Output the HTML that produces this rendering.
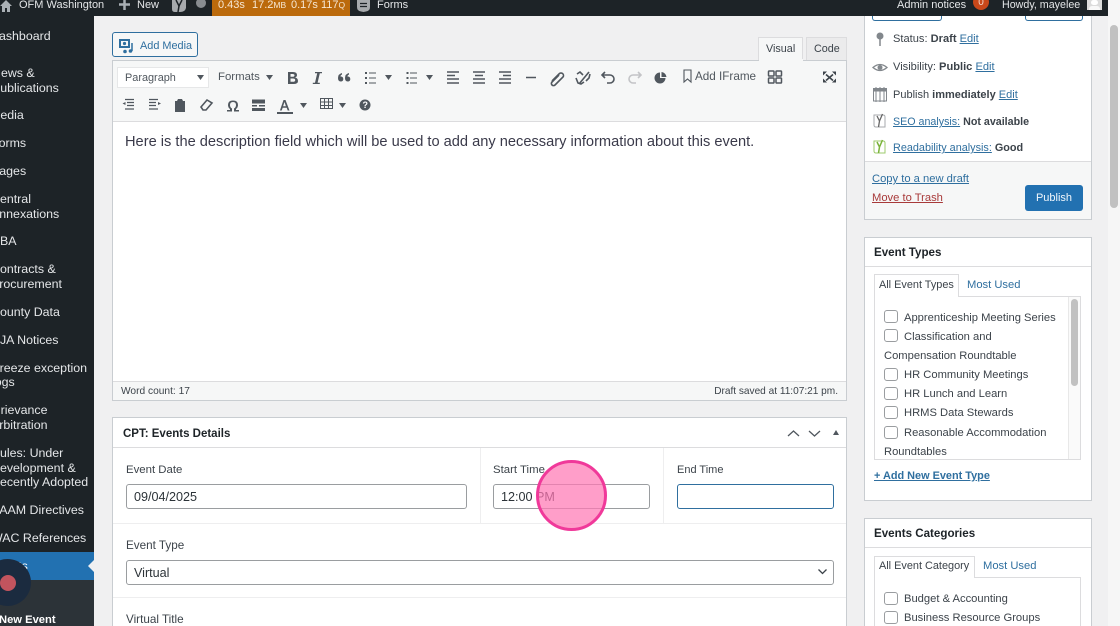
<!DOCTYPE html>
<html lang="en"><head><meta charset="utf-8"><title>Edit Event</title>
<style>
html,body{margin:0;padding:0;width:1120px;height:626px;overflow:hidden;background:#f0f0f1}
body{font-family:"Liberation Sans",sans-serif;font-size:12px;color:#3c434a}
#w{position:relative;width:1120px;height:626px;overflow:hidden;filter:blur(.35px)}
.a{position:absolute;box-sizing:border-box}
.t{position:absolute;white-space:nowrap;line-height:20px;height:20px}
.t:not(.s){margin-top:1px}
.s{color:#e4e6e8;font-size:12.4px}
.b{color:#e4e6e8;font-size:11px}
.l{color:#2f6f9f;text-decoration:underline}
.box{position:absolute;box-sizing:border-box;background:#fff;border:1px solid #c9cdd1}
.in{position:absolute;box-sizing:border-box;background:#fff;border:1px solid #9a9da0;border-radius:3px;height:25px;font-size:12.6px;line-height:24px;padding-left:7px;color:#2c3338}
.cb{position:absolute;box-sizing:border-box;width:14px;height:13px;background:#fff;border:1px solid #9a9da0;border-radius:3px}
svg{position:absolute;overflow:visible}
.ic{fill:none;stroke:#50575e;stroke-width:1.6}
.f{fill:#50575e;stroke:none}
.p{font-size:11px}
.r{font-size:11.2px}
.h{font-size:11.6px;font-weight:bold;color:#1d2327}
.lb{font-size:11.4px}
</style></head><body><div id="w">

<!-- sidebar -->
<div class="a" style="left:0;top:16px;width:94px;height:610px;background:#1d2327"></div>
<div class="a" style="left:0;top:580px;width:94px;height:46px;background:#2c3338"></div>
<div class="a" style="left:0;top:552px;width:94px;height:28px;background:#2271b1"></div>
<div class="a" style="left:88px;top:560px;border:6px solid transparent;border-right:6px solid #f0f0f1;border-left:0"></div>
<div class="t s" style="left:-10px;top:26px">Dashboard</div>
<div class="t s" style="left:-8px;top:63px">News &amp;</div>
<div class="t s" style="left:-8px;top:78px">Publications</div>
<div class="t s" style="left:-10px;top:105px">Media</div>
<div class="t s" style="left:-9px;top:133px">Forms</div>
<div class="t s" style="left:-9px;top:161px">Pages</div>
<div class="t s" style="left:-9px;top:189px">Central</div>
<div class="t s" style="left:-9px;top:204px">Annexations</div>
<div class="t s" style="left:-9px;top:231px">CBA</div>
<div class="t s" style="left:-9px;top:259px">Contracts &amp;</div>
<div class="t s" style="left:-9px;top:274px">Procurement</div>
<div class="t s" style="left:-9px;top:302px">County Data</div>
<div class="t s" style="left:-9px;top:330px">CJA Notices</div>
<div class="t s" style="left:-8px;top:358px">Freeze exception</div>
<div class="t s" style="left:-8px;top:372px">logs</div>
<div class="t s" style="left:-9px;top:400px">Grievance</div>
<div class="t s" style="left:-9px;top:415px">Arbitration</div>
<div class="t s" style="left:-9px;top:443px">Rules: Under</div>
<div class="t s" style="left:-9px;top:458px">Development &amp;</div>
<div class="t s" style="left:-9px;top:472px">Recently Adopted</div>
<div class="t s" style="left:-9px;top:500px">SAAM Directives</div>
<div class="t s" style="left:-9px;top:528px">WAC References</div>
<div class="t s" style="left:-10px;top:556px;color:#fff">Events</div>
<div class="t s" style="left:-1px;top:610px;color:#fff;font-weight:bold;font-size:11.200px">New Event</div>
<div class="a" style="left:-16px;top:559px;width:47px;height:47px;border-radius:50%;background:#1b2b3f"></div>
<div class="a" style="left:0;top:575px;width:16px;height:16px;border-radius:50%;background:#c2545e"></div>

<!-- add media -->
<div class="a" style="left:112px;top:32px;width:86px;height:25px;border:1px solid #2f6f9f;border-radius:3px;background:#f6f7f7"></div>
<svg style="left:119px;top:38px" width="16" height="16"><path d="M1 2h9v7H1z" fill="none" stroke="#2f6f9f" stroke-width="2"/><circle cx="5.500" cy="5.500" r="1.600" fill="#2f6f9f"/><path d="M13 5v8" stroke="#2f6f9f" stroke-width="1.500"/><circle cx="11.500" cy="13" r="1.800" fill="#2f6f9f"/><circle cx="6" cy="13.500" r="1.800" fill="#2f6f9f"/></svg>
<div class="t" style="left:140px;top:35px;color:#2f6f9f;font-size:10.900px">Add Media</div>

<!-- tabs -->
<div class="a" style="left:758px;top:37px;width:45px;height:24px;background:#f6f7f7;border:1px solid #dcdcde;border-bottom:0"></div>
<div class="t" style="left:766px;top:38px;font-size:10.800px">Visual</div>
<div class="a" style="left:806px;top:37px;width:41px;height:24px;background:#ebebec;border:1px solid #dcdcde;border-bottom:0"></div>
<div class="t" style="left:814px;top:38px;font-size:10.800px">Code</div>

<!-- editor -->
<div class="a" style="left:112px;top:60px;width:735px;height:341px;background:#fff;border:1px solid #c9cdd1"></div>
<div class="a" style="left:113px;top:61px;width:733px;height:61px;background:#f6f7f7;border-bottom:1px solid #dcdcde"></div>
<div class="a" style="left:758.500px;top:59px;width:44px;height:3px;background:#f6f7f7"></div>
<div class="a" style="left:117px;top:67px;width:92px;height:21px;background:#fff;border:1px solid #e6e7e8"></div>
<div class="t" style="left:125px;top:67px;font-size:10.900px;color:#50575e">Paragraph</div>
<svg style="left:0;top:0" width="1120" height="130">
<path class="f" d="M197 75h7l-3.500 5zM266 75h7l-3.500 5zM385 75h7l-3.500 5zM426 75h7l-3.500 5zM300 103h7l-3.500 5zM339 103h7l-3.500 5z"/>
<path class="f" d="M288 72h5q4 0 4 3 0 2-2 2.500 3 .5 3 3.500 0 3-4.500 3H288zm2.500 2v2.800h2q2 0 2-1.400t-2-1.400zm0 4.500v3.300h2.500q2.200 0 2.200-1.700 0-1.600-2.200-1.600z"/>
<path class="f" d="M315 72h7v1.200h-2.200l-2.200 9.600h2.200V84h-7v-1.200h2.200l2.200-9.600h-2.200z"/>
<path class="f" d="M338 78q0-4 4-5v1.500q-1.500.6-1.500 2 2.800 0 2.800 2.600 0 2.400-2.600 2.400-2.700 0-2.700-3.500zm7 0q0-4 4-5v1.500q-1.500.6-1.500 2 2.800 0 2.800 2.600 0 2.400-2.600 2.400-2.700 0-2.700-3.500z"/>
<path class="ic" d="M369 73h7M369 78h7M369 83h7M410 73h7M410 78h7M410 83h7" style="stroke-width:1"/>
<path class="f" d="M365 72h2v2h-2zM365 77h2v2h-2zM365 82h2v2h-2zM406.500 72h2v2h-2zM406.500 77h2v2h-2zM406.500 82h2v2h-2z"/>
<path class="ic" d="M447 72h12M447 75.500h8M447 79h12M447 83h12M473 72h12M475 75.500h8M473 79h12M473 83h12M499 72h12M503 75.500h8M499 79h12M499 83h12M526 77.500h10"/>
<path class="ic" d="M552 81l7-7a2.500 2.500 0 0 1 4 3l-8 8a2 2 0 0 1-3-3l7-7"/>
<path class="ic" d="M577 74l3-2 3 3M589 72l-10 12M590 74l-1 4-3 3M576 78l2 5 3 1 3-2"/>
<path class="ic" d="M605 72l-3 3 3 3M602 75h8a3.500 3.500 0 0 1 0 8h-3"/>
<path class="ic" style="stroke:#c3c4c7" d="M638 72l3 3-3 3M641 75h-8a3.500 3.500 0 0 0 0 8h3"/>
<path class="f" d="M660 73v5h5.500a5.500 5.500 0 1 1-5.500-5.500zM661.500 72a5.500 5.500 0 0 1 5 5h-5z"/>
<path class="ic" style="stroke-width:1.100" d="M684 70h7v12l-3.500-3-3.500 3z"/>
<rect class="ic" style="stroke-width:1.500" x="768.500" y="71" width="5.500" height="5" rx=".8"/><rect class="ic" style="stroke-width:1.500" x="776" y="71" width="5.500" height="5" rx=".8"/><rect class="ic" style="stroke-width:1.500" x="768.500" y="78" width="5.500" height="5" rx=".8"/><rect class="ic" style="stroke-width:1.500" x="776" y="78" width="5.500" height="5" rx=".8"/>
<path class="ic" style="stroke:#3c434a" d="M826 74.500l7 6M833 74.500l-7 6"/>
<path class="f" style="fill:#3c434a" d="M823 71.500h4l-4 4zM836 71.500h-4l4 4zM823 82.500h4l-4-4zM836 82.500h-4l4-4z"/>
<path class="ic" style="stroke-width:1.200" d="M125 99.500h9M127 102.500h7M127 105.500h7M125 109h9M149 99.500h9M149 102.500h7M149 105.500h7M149 109h9"/>
<path class="f" d="M125.500 102v3l-3-1.500zM158 102v3l3-1.500z"/>
<path class="f" d="M175 101h2l1-2h4l1 2h2v11h-10zM177 104h6v1.500h-2.200v4.500h-1.600v-4.500H177z"/>
<path class="ic" d="M201 107l6-7 5 3-6 7h-3z"/>
<path class="f" d="M227 110h3v-1q-2-1.500-2-4 0-4.500 5-4.500t5 4.500q0 2.500-2 4v1h3v1.500h-5v-3q2-1 2-3.500 0-3-3-3t-3 3q0 2.500 2 3.500v3h-5z"/>
<path class="f" d="M252 99.500h13v4h-13zM252 105h5v1.500h-5zM259 105h6v1.500h-6zM252 108h13v3h-13z"/>
<path class="f" d="M283.500 100h2l4 10.500h-1.800l-1-2.800h-4l-1 2.800h-1.800zm1 2-1.400 4.200h2.800z"/>
<path class="f" d="M277 112h16v2h-16z"/>
<path class="ic" style="stroke-width:1" d="M320.500 98.500h12v10h-12zM320.500 102h12M320.500 105.500h12M324.500 98.500v10M328.500 98.500v10"/>
<circle class="f" cx="365" cy="105" r="5.500"/>
</svg>
<div class="t" style="left:218px;top:66px;font-size:11.400px;color:#50575e">Formats</div>
<div class="t" style="left:695px;top:66px;font-size:11.700px;color:#50575e">Add IFrame</div>
<div class="t" style="left:362.500px;top:94px;font-size:9px;font-weight:bold;color:#fff">?</div>
<div class="t" style="left:125px;top:131px;font-size:14.640px;color:#3a3a4a">Here is the description field which will be used to add any necessary information about this event.</div>
<div class="a" style="left:113px;top:381px;width:733px;height:19px;background:#f6f7f7;border-top:1px solid #dcdcde"></div>
<div class="t" style="left:121px;top:381px;font-size:10.200px">Word count: 17</div>
<div class="t" style="right:282px;top:381px;font-size:10.100px">Draft saved at 11:07:21 pm.</div>

<!-- CPT -->
<div class="box" style="left:112px;top:417px;width:735px;height:230px"></div>
<div class="a" style="left:113px;top:447px;width:733px;height:1px;background:#dcdcde"></div>
<div class="t h" style="left:123px;top:423px;font-size:11.500px">CPT: Events Details</div>
<svg style="left:0;top:0" width="1120" height="626">
<path class="ic" style="stroke-width:1.300" d="M788 436l5.500-5 5.500 5M809 431l5.500 5 5.500-5M1032 255l5.500-5 5.500 5M1053 250l5.500 5 5.500-5M1032 536l5.500-5 5.500 5M1053 531l5.500 5 5.500-5"/>
<path class="f" d="M833 435l3-5 3 5zM1077 254l3-5 3 5zM1077 535l3-5 3 5z"/>
</svg>
<div class="a" style="left:113px;top:523px;width:733px;height:1px;background:#eeeeef"></div>
<div class="a" style="left:113px;top:597px;width:733px;height:1px;background:#eeeeef"></div>
<div class="a" style="left:480px;top:448px;width:1px;height:75px;background:#eeeeef"></div>
<div class="a" style="left:663px;top:448px;width:1px;height:75px;background:#eeeeef"></div>
<div class="t lb" style="left:126px;top:459px">Event Date</div>
<div class="t lb" style="left:493px;top:459px">Start Time</div>
<div class="t lb" style="left:677px;top:459px;font-size:11px">End Time</div>
<div class="in" style="left:126px;top:484px;width:341px">09/04/2025</div>
<div class="in" style="left:493px;top:484px;width:157px">12:00 PM</div>
<div class="in" style="left:677px;top:484px;width:157px;border-color:#2f6f9f"></div>
<div class="t" style="left:126px;top:535px;font-size:11.700px">Event Type</div>
<div class="in" style="left:126px;top:560px;width:708px">Virtual</div>
<svg style="left:818px;top:569px" width="9" height="6"><path d="M.5.500l4 4 4-4" fill="none" stroke="#3c434a" stroke-width="1.300"/></svg>
<div class="t" style="left:126px;top:609px;font-size:11.700px">Virtual Title</div>

<!-- pink click -->
<div class="a" style="left:536px;top:460px;width:71px;height:71px;border-radius:50%;background:rgba(255,120,180,.72);border:3px solid #f0399a"></div>

<!-- Publish box -->
<div class="box" style="left:864px;top:-10px;width:228px;height:230px"></div>
<div class="a" style="left:872px;top:10px;width:70px;height:11px;border:1px solid #2f6f9f;border-top:0;border-radius:0 0 3px 3px"></div>
<div class="a" style="left:1025px;top:10px;width:58px;height:11px;border:1px solid #2f6f9f;border-top:0;border-radius:0 0 3px 3px"></div>
<div class="a" style="left:865px;top:161px;width:226px;height:58px;background:#f6f7f7;border-top:1px solid #dcdcde"></div>
<svg style="left:0;top:0" width="1120" height="170">
<circle class="f" style="fill:#82878c" cx="880" cy="36" r="3.500"/><path d="M880 38v8" stroke="#82878c" stroke-width="1.500"/>
<path d="M873 67.500q7-6 14 0-7 6-14 0z" fill="none" stroke="#82878c" stroke-width="1.300"/><circle cx="880" cy="67.500" r="2.500" fill="#82878c"/>
<path d="M873.500 89h13v12h-13z" fill="none" stroke="#82878c" stroke-width="1"/><path d="M873 88h14v3.500h-14z" fill="#82878c"/><path d="M876 87v15M880 87v15M884 87v15" stroke="#82878c" stroke-width="1"/>
<path d="M874 115h9q2 0 2 2v10h-9q-2 0-2-2z" fill="none" stroke="#a7aaad"/><path d="M877 116l2.500 5 3-7M879.500 121l-1 6" fill="none" stroke="#666" stroke-width="1.300"/>
<path d="M874 141h9q2 0 2 2v10h-9q-2 0-2-2z" fill="none" stroke="#9ecb6c"/><path d="M877 142l2.500 5 3-7M879.500 147l-1 6" fill="none" stroke="#7ab33a" stroke-width="1.500"/>
</svg>
<div class="t p" style="left:893px;top:28px;font-size:11.100px">Status: <b>Draft</b> <span class="l">Edit</span></div>
<div class="t p" style="left:893px;top:56px;font-size:11.100px">Visibility: <b>Public</b> <span class="l">Edit</span></div>
<div class="t p" style="left:893px;top:84px">Publish <b>immediately</b> <span class="l">Edit</span></div>
<div class="t" style="left:893px;top:111px;font-size:10.700px"><span class="l">SEO analysis:</span> <b>Not available</b></div>
<div class="t" style="left:893px;top:137px;font-size:10.850px"><span class="l">Readability analysis:</span> <b>Good</b></div>
<div class="t l r" style="left:872px;top:168px">Copy to a new draft</div>
<div class="t r" style="left:872px;top:187px;color:#a83a3a;text-decoration:underline">Move to Trash</div>
<div class="a" style="left:1025px;top:185px;width:58px;height:26px;background:#2271b1;border-radius:3px;color:#f0f6fc;font-size:11px;line-height:27px;text-align:center">Publish</div>

<!-- Event types -->
<div class="box" style="left:864px;top:237px;width:228px;height:264px"></div>
<div class="a" style="left:865px;top:266px;width:226px;height:1px;background:#dcdcde"></div>
<div class="t h" style="left:874px;top:242px">Event Types</div>
<div class="a" style="left:874px;top:296px;width:207px;height:164px;border:1px solid #dcdcde;background:#fff"></div>
<div class="a" style="left:874px;top:274px;width:85px;height:23px;border:1px solid #dcdcde;border-bottom:0;background:#fff"></div>
<div class="t" style="left:879px;top:274px;font-size:10.900px">All Event Types</div>
<div class="t r" style="left:967px;top:274px;color:#2f6f9f">Most Used</div>
<div class="a" style="left:1068px;top:297px;width:12px;height:162px;background:#fafafa;border-left:1px solid #e8e8e8"></div>
<div class="a" style="left:1071px;top:299px;width:7px;height:87px;background:#c1c1c1;border-radius:4px"></div>
<div class="cb" style="left:884px;top:310px"></div><div class="t r" style="left:904px;top:307px">Apprenticeship Meeting Series</div>
<div class="cb" style="left:884px;top:329px"></div><div class="t r" style="left:904px;top:326px">Classification and</div>
<div class="t r" style="left:884px;top:345px">Compensation Roundtable</div>
<div class="cb" style="left:884px;top:368px"></div><div class="t r" style="left:904px;top:364px">HR Community Meetings</div>
<div class="cb" style="left:884px;top:387px"></div><div class="t r" style="left:904px;top:383px">HR Lunch and Learn</div>
<div class="cb" style="left:884px;top:406px"></div><div class="t r" style="left:904px;top:402px">HRMS Data Stewards</div>
<div class="cb" style="left:884px;top:426px"></div><div class="t r" style="left:904px;top:422px">Reasonable Accommodation</div>
<div class="t r" style="left:884px;top:441px">Roundtables</div>
<div class="t l" style="left:874px;top:465px;font-size:10.900px;font-weight:bold">+ Add New Event Type</div>

<!-- Events categories -->
<div class="box" style="left:864px;top:518px;width:228px;height:130px"></div>
<div class="a" style="left:865px;top:547px;width:226px;height:1px;background:#dcdcde"></div>
<div class="t h" style="left:874px;top:523px">Events Categories</div>
<div class="a" style="left:874px;top:577px;width:207px;height:60px;border:1px solid #dcdcde;background:#fff"></div>
<div class="a" style="left:874px;top:556px;width:101px;height:22px;border:1px solid #dcdcde;border-bottom:0;background:#fff"></div>
<div class="t" style="left:879px;top:555px;font-size:10.900px">All Event Category</div>
<div class="t r" style="left:983px;top:555px;color:#2f6f9f">Most Used</div>
<div class="cb" style="left:884px;top:592px"></div><div class="t r" style="left:904px;top:588px">Budget &amp; Accounting</div>
<div class="cb" style="left:884px;top:611px"></div><div class="t r" style="left:904px;top:607px">Business Resource Groups</div>

<!-- admin bar (above content) -->
<div class="a" style="left:0;top:0;width:1108px;height:16px;background:#1d2327"></div>
<div class="a" style="left:212px;top:0;width:138px;height:16px;background:#bb6a0c"></div>
<svg style="left:0;top:0" width="14" height="14"><path d="M0 6 6 0l6 6M2 6v6h3V8h2v4h3V6" fill="#aab0b5"/></svg>
<div class="t b" style="left:19px;top:-6px">OFM Washington</div>
<svg style="left:119px;top:0" width="12" height="10"><path d="M0 4.500h11M5.500 0v10" stroke="#aab0b5" stroke-width="2.500"/></svg>
<div class="t b" style="left:137px;top:-6px">New</div>
<svg style="left:172px;top:0" width="14" height="12"><path d="M0 0h14v8q-1 4-6 4H3Q0 12 0 9z" fill="#a7aaad"/><path d="M4 0l3 6 3-6" stroke="#1d2327" stroke-width="1.500" fill="none"/><path d="M7 6 6 12" stroke="#1d2327" stroke-width="1.500"/></svg>
<div class="a" style="left:196px;top:-2px;width:10px;height:10px;border-radius:50%;background:#888c90"></div>
<div class="t" style="left:218px;top:-6px;color:#f6e7d3;font-size:11px">0.43s</div>
<div class="t" style="left:252px;top:-6px;color:#f6e7d3;font-size:11px">17.2<span style="font-size:8.500px">MB</span></div>
<div class="t" style="left:291px;top:-6px;color:#f6e7d3;font-size:11px">0.17s</div>
<div class="t" style="left:321px;top:-6px;color:#f6e7d3;font-size:11px">117<span style="font-size:8.500px">Q</span></div>
<svg style="left:357px;top:0" width="13" height="12"><path d="M0 0h13v7q0 4-4 4.500L6.500 12 4 11.500Q0 11 0 7z" fill="#a7aaad"/><path d="M3 3.500h7M3 6.500h7" stroke="#1d2327" stroke-width="1.300"/></svg>
<div class="t b" style="left:377px;top:-6px">Forms</div>
<div class="t b" style="left:897px;top:-6px">Admin notices</div>
<div class="a" style="left:973px;top:-6px;width:16px;height:16px;border-radius:50%;background:#c9481a;color:#f4d9cc;font-size:10px;line-height:17px;text-align:center">0</div>
<div class="t b" style="left:1002px;top:-6px;font-size:10.700px">Howdy, mayelee</div>
<div class="a" style="left:1087px;top:0;width:15px;height:10px;background:#dcdcdc"></div>
<div class="a" style="left:1091px;top:0;width:7px;height:5px;background:#fff;border-radius:3px"></div>
<div class="a" style="left:1089px;top:6px;width:11px;height:4px;background:#f8f8f8;border-radius:3px 3px 0 0"></div>

<!-- page scrollbar -->
<div class="a" style="left:1108px;top:0;width:12px;height:626px;background:#f6f6f6"></div>
<div class="a" style="left:1110px;top:25px;width:8px;height:183px;background:#c1c1c1;border-radius:4px"></div>
</div></body></html>
